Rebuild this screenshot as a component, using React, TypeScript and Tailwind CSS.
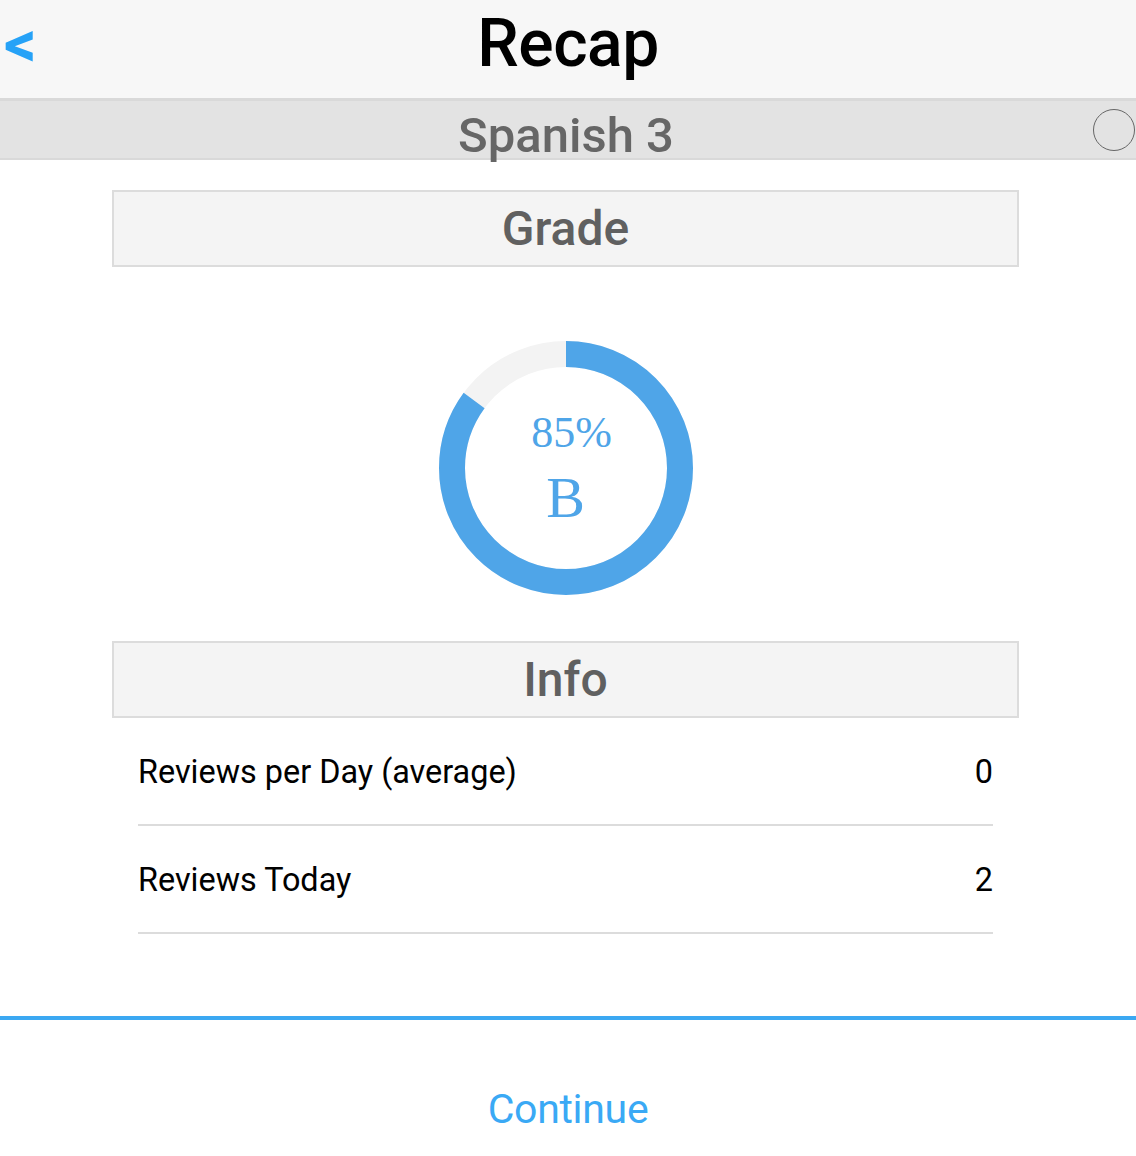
import React from 'react';

const rows = [
  { label: 'Reviews per Day (average)', value: '0' },
  { label: 'Reviews Today', value: '2' },
];

const Donut: React.FC<{ pct: number; grade: string }> = ({ pct, grade }) => {
  const r = 114;
  const c = 2 * Math.PI * r;
  return (
    <div className="relative w-[256px] h-[256px]">
      <svg width="256" height="256" viewBox="0 0 256 256" className="-rotate-90">
        <circle cx="128" cy="128" r={r} fill="none" stroke="#f3f3f3" strokeWidth="26" />
        <circle
          cx="128"
          cy="128"
          r={r}
          fill="none"
          stroke="#4fa5e8"
          strokeWidth="26"
          strokeDasharray={`${c * pct} ${c}`}
        />
      </svg>
      <div className="absolute inset-0 flex flex-col items-center justify-center text-[#4fa5e8] font-['Liberation_Serif',serif]">
        <span className="text-[44px] leading-none mt-[2px] ml-[12px]">85%</span>
        <span className="text-[58px] leading-none mt-[14px]">{grade}</span>
      </div>
    </div>
  );
};

const SectionHeader: React.FC<{ title: string }> = ({ title }) => (
  <div className="h-[77px] bg-[#f4f4f4] border-2 border-[#dcdcdc] flex items-center justify-center">
    <span className="text-[48px] font-medium text-[#606060] leading-none mt-[1px]">{title}</span>
  </div>
);

export default function App() {
  return (
    <div className="w-[1136px] h-[1156px] bg-white flex flex-col font-['Roboto',sans-serif] overflow-hidden">
      <div className="h-[101px] bg-[#f7f7f7] border-b-[3px] border-[#d9d9d9] grid grid-cols-[1fr_auto_1fr] items-center">
        <button className="justify-self-start pl-[4px] text-[#26a2f7] text-[64px] font-bold leading-none mt-[-8px]">&lt;</button>
        <h1 className="text-[66px] font-medium text-black leading-none tracking-[-0.5px] mt-[-10px]">Recap</h1>
        <div />
      </div>
      <div className="h-[59px] bg-[#e3e3e3] border-b-2 border-[#d9d9d9] grid grid-cols-[1fr_auto_1fr] items-center">
        <div />
        <span className="text-[49px] font-medium text-[#666666] leading-none mt-[10px] mr-[4px]">Spanish 3</span>
        <div className="justify-self-end w-[42px] h-[42px] rounded-full border-[1.5px] border-[#666666] mr-[1px] mt-[-2px]" />
      </div>

      <div className="pl-[112px] pr-[117px] pt-[30px]">
        <SectionHeader title="Grade" />
        <div className="flex justify-center pt-[73px] pb-[45px]">
          <Donut pct={0.85} grade="B" />
        </div>
        <SectionHeader title="Info" />
        <div className="px-[26px]">
          {rows.map((row) => (
            <div
              key={row.label}
              className="h-[108px] border-b-2 border-[#dcdcdc] flex items-center justify-between text-[32.4px] text-black"
            >
              <span className="mt-[3px]">{row.label}</span>
              <span className="mt-[3px]">{row.value}</span>
            </div>
          ))}
        </div>
      </div>

      <div className="mt-auto h-[140px] border-t-4 border-[#3ba8f2] flex items-center justify-center">
        <span className="text-[41px] text-[#3aa9f5] leading-none mt-[42px] tracking-[-0.3px]">Continue</span>
      </div>
    </div>
  );
}
